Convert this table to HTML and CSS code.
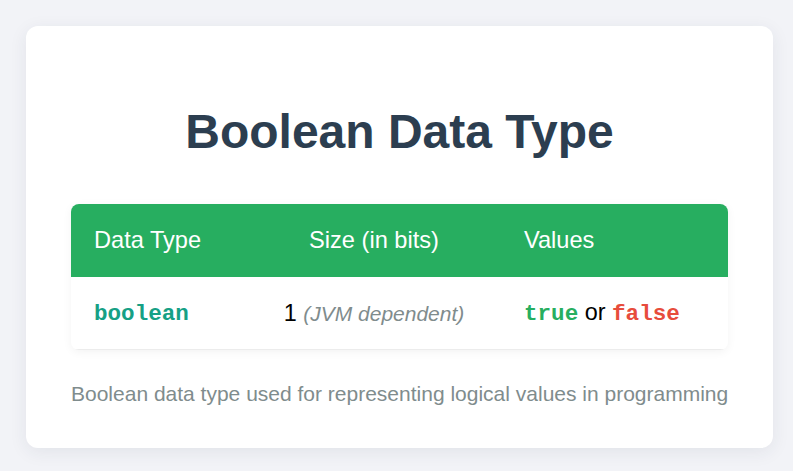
FILE: index.html
```html
<!DOCTYPE html>
<html lang="en">
<head>
<meta charset="utf-8">
<title>Boolean Data Type</title>
<link rel="stylesheet" href="styles.css">
</head>
<body>
  <main class="card">
    <h1 class="title">Boolean Data Type</h1>
    <table class="types">
      <thead>
        <tr>
          <th class="col-type">Data Type</th>
          <th class="col-size">Size (in bits)</th>
          <th class="col-values">Values</th>
        </tr>
      </thead>
      <tbody>
        <tr>
          <td class="col-type"><code class="kw">boolean</code></td>
          <td class="col-size">1 <span class="note">(JVM dependent)</span></td>
          <td class="col-values"><code class="lit-true">true</code> or <code class="lit-false">false</code></td>
        </tr>
      </tbody>
    </table>
    <p class="caption">Boolean data type used for representing logical values in programming</p>
  </main>
</body>
</html>
```
FILE: styles.css
```css
* { box-sizing: border-box; }

html, body {
  margin: 0;
  padding: 0;
}

body {
  background: #f2f3f7;
  font-family: "Liberation Sans", Arial, sans-serif;
  font-size: 23.4px;
  color: #000;
  padding: 26px 20px 23px 26px;
}

.card {
  width: 747px;
  height: 422px;
  background: #ffffff;
  border-radius: 12px;
  box-shadow: 0 4px 18px rgba(40, 50, 80, 0.08);
  padding: 45px;
  display: flex;
  flex-direction: column;
}

.title {
  margin: 33px 0 45px;
  text-align: center;
  font-size: 48px;
  font-weight: 700;
  color: #2c3e50;
  line-height: normal;
}

.types {
  width: 657px;
  border-collapse: collapse;
  border-radius: 8px;
  overflow: hidden;
  box-shadow: 0 2px 10px rgba(0, 0, 0, 0.05);
}

.types th {
  background: #27ae60;
  color: #ffffff;
  font-weight: 400;
  padding: 23px;
  text-align: left;
  line-height: normal;
  font-size: 23.6px;
}

.types td {
  padding: 22px 23px;
  border-bottom: 1px solid #ececec;
  line-height: normal;
  text-align: left;
}

.types .col-type { width: 176px; }
.types .col-size { width: 254px; text-align: center; }
.types .col-values { width: 227px; }

code {
  font-family: "Liberation Mono", "Courier New", monospace;
  font-weight: 700;
  font-size: 22.6px;
}

.kw { color: #16a085; }
.lit-true { color: #27ae60; }
.lit-false { color: #e74c3c; }

.note {
  font-style: italic;
  font-size: 21px;
  color: #7f8c8d;
}

.caption {
  margin: 32px 0 0;
  text-align: center;
  font-size: 21px;
  white-space: nowrap;
  color: #7f8c8d;
  line-height: normal;
}
```
